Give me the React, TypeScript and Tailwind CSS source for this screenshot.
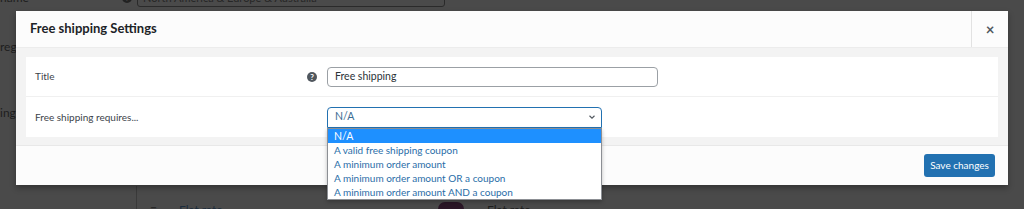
import React from "react";

const options = [
  "N/A",
  "A valid free shipping coupon",
  "A minimum order amount",
  "A minimum order amount OR a coupon",
  "A minimum order amount AND a coupon",
];

function HelpIcon() {
  return (
    <span className="flex h-[10px] w-[10px] items-center justify-center rounded-full bg-[#50575e] text-[8px] font-bold leading-none text-white">
      ?
    </span>
  );
}

export default function App() {
  return (
    <div
      className="relative h-[209px] w-[1024px] overflow-hidden bg-[#4a4a4a] text-[#1d1d1d]"
      style={{ fontFamily: 'Lato, "Noto Sans", sans-serif' }}
    >
      {/* dimmed page behind the modal */}
      <div className="absolute left-0 top-[-11px] flex w-full items-center text-[12px] text-[#1e1e1e]">
        <span className="w-[122px]">name</span>
        <span className="flex h-[10px] w-[10px] items-center justify-center rounded-full bg-[#222] text-[8px] text-[#4a4a4a]">?</span>
        <div className="ml-[5px] h-[18px] w-[308px] rounded-[3px] border border-[#2a2a2a] px-[5px] text-[11px] leading-[16px] text-[#262626]">
          North America &amp; Europe &amp; Australia
        </div>
      </div>
      <div className="absolute left-0 top-[38px] text-[12px] text-[#1e1e1e]">regi</div>
      <div className="absolute left-0 top-[104px] text-[12px] text-[#1e1e1e]">ing</div>
      <div className="absolute left-[136px] top-[186px] h-[30px] border-l border-[#3a3a3a]" />
      <div className="absolute left-[150px] top-[201px] text-[12px] text-[#222]">≡</div>
      <div className="absolute left-[179px] top-[201px] text-[12px] text-[#1c2c3c]">Flat rate</div>
      <div className="absolute left-[438px] top-[202px] h-[14px] w-[26px] rounded-full bg-[#2a1626]" />
      <div className="absolute left-[487px] top-[201px] text-[12px] text-[#1e1e1e]">Flat rate</div>

      {/* modal */}
      <div className="absolute left-[16px] top-[11px] flex w-[992px] flex-col bg-[#fcfcfc] shadow-[0_3px_6px_rgba(0,0,0,0.3)]">
        <div className="flex h-[37px] items-stretch border-b border-[#ececec]">
          <h1 className="flex flex-1 items-center pl-[14px] text-[13px] font-bold text-[#1d2327]">
            Free shipping Settings
          </h1>
          <button className="flex w-[37px] items-center justify-center border-l border-[#e2e2e2] text-[15px] font-bold leading-none text-[#50575e]">
            ×
          </button>
        </div>

        <div className="bg-[#f3f3f3] px-[10px] pt-[9px] pb-[8px]">
          <div className="bg-white">
            <div className="flex h-[40px] items-center border-b border-[#f0f0f0]">
              <span className="w-[281px] pl-[9px] text-[10px] text-[#3c434a]">Title</span>
              <HelpIcon />
              <div className="ml-[10px] flex h-[20px] w-[331px] items-center rounded-[4px] border border-[#9ba0a5] px-[7px] text-[10.5px] text-[#2c3338]">
                Free shipping
              </div>
            </div>
            <div className="flex h-[40px] items-center">
              <span className="w-[301px] pl-[9px] text-[10px] text-[#3c434a]">Free shipping requires...</span>
              <div className="flex h-[21px] w-[275px] items-center justify-between rounded-t-[4px] border border-[#2271b1] pl-[7px] pr-[4px] text-[10.5px] text-[#3a6b93]">
                <span>N/A</span>
                <svg width="10" height="10" viewBox="0 0 20 20" fill="none" stroke="#50575e" strokeWidth="2.2">
                  <path d="M5 7.5l5 5 5-5" />
                </svg>
              </div>
            </div>
          </div>
        </div>

        <div className="flex h-[40px] items-center justify-end border-t border-[#e8e8e8] pr-[13px]">
          <button className="h-[23px] w-[71px] rounded-[3px] bg-[#2271b1] text-[10px] text-white">
            Save changes
          </button>
        </div>
      </div>

      {/* open dropdown list */}
      <ul className="absolute left-[327px] top-[128px] w-[275px] border border-[#8c8f94] bg-white text-[10px] shadow-[0_2px_4px_rgba(0,0,0,0.25)]">
        {options.map((o, i) => (
          <li
            key={o}
            className={
              i === 0
                ? "h-[14px] bg-[#1e90ff] pl-[6px] text-[10.5px] leading-[14px] text-white"
                : "h-[14px] pl-[6px] leading-[14px] text-[#2a6ea8]"
            }
          >
            {o}
          </li>
        ))}
      </ul>
    </div>
  );
}
